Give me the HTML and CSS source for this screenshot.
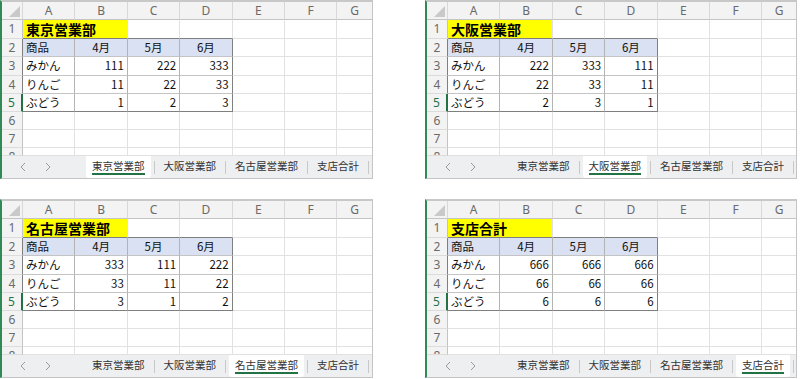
FILE: index.html
```html
<!DOCTYPE html>
<html>

<head>
  <title>支店別売上</title>
  <link rel="stylesheet" href="styles.css">
</head>

<body>
  <div id="sheets"></div>

  <script>
    var tabs = ["東京営業部", "大阪営業部", "名古屋営業部", "支店合計"];
    var fruits = ["みかん", "りんご", "ぶどう"];
    var cols = ["A", "B", "C", "D", "E", "F", "G"];
    var data = [
      [[111, 222, 333], [11, 22, 33], [1, 2, 3]],
      [[222, 333, 111], [22, 33, 11], [2, 3, 1]],
      [[333, 111, 222], [33, 11, 22], [3, 1, 2]],
      [[666, 666, 666], [66, 66, 66], [6, 6, 6]]
    ];

    function cell(parent, cls, text) {
      var d = document.createElement("div");
      d.className = "c " + cls;
      if (text !== undefined) d.textContent = text;
      parent.appendChild(d);
      return d;
    }

    function chevron(points) {
      return '<svg width="6" height="10" viewBox="0 0 6 10"><polyline points="' + points +
        '" fill="none" stroke="#9a9a9a" stroke-width="1"/></svg>';
    }

    var box = document.getElementById("sheets");

    for (var s = 0; s < tabs.length; s++) {
      var win = document.createElement("div");
      win.className = "win";

      // Grid: column letters, then rows 1 to 8
      var grid = document.createElement("div");
      grid.className = "grid";
      cell(grid, "hd corner");
      for (var i = 0; i < cols.length; i++) {
        cell(grid, "hd" + (i == 6 ? " g" : ""), cols[i]);
      }

      for (var r = 1; r <= 8; r++) {
        var rcls = "rh";
        if (r >= 2 && r <= 5) rcls += " tl";
        if (r == 5) rcls += " sel";
        if (r == 8) rcls += " cut";
        cell(grid, rcls, r);

        for (var c = 0; c < cols.length; c++) {
          var g = (c == 6 ? " g" : "");
          if (r == 1 && c == 0) {
            cell(grid, "title top", tabs[s]);
            c++;
          } else if (r == 1 && c < 4) {
            cell(grid, "top");
          } else if (r >= 2 && r <= 5 && c < 4) {
            var cls = "tb";
            if (c == 3) cls += " re";
            if (r == 5) cls += " be";
            if (r == 2) {
              cls += " th" + (c == 0 ? " first" : "");
              cell(grid, cls, c == 0 ? "商品" : (c + 3) + "月");
            } else if (c == 0) {
              cell(grid, cls, fruits[r - 3]);
            } else {
              cell(grid, cls + " num", data[s][r - 3][c - 1]);
            }
          } else {
            cell(grid, "plain" + g);
          }
        }
      }
      win.appendChild(grid);

      // Sheet tabs
      var bar = document.createElement("div");
      bar.className = "tabbar";
      var navs = document.createElement("div");
      navs.className = "navs";
      navs.innerHTML = '<span class="nav">' + chevron("5,1 1,5 5,9") + '</span>' +
        '<span class="nav">' + chevron("1,1 5,5 1,9") + '</span>';
      bar.appendChild(navs);

      for (var t = 0; t < tabs.length; t++) {
        var tab = document.createElement("div");
        tab.className = "tab" + (t == s ? " on" : "");
        tab.innerHTML = "<span>" + tabs[t] + "</span>";
        bar.appendChild(tab);
        var sep = document.createElement("div");
        sep.className = "sep";
        bar.appendChild(sep);
      }
      win.appendChild(bar);

      box.appendChild(win);
    }
  </script>
</body>

</html>
```

FILE: styles.css
```css
body {
  margin: 0;
  background: #fff;
  font-family: "Noto Sans CJK JP", "Noto Sans", sans-serif;
}

#sheets {
  display: grid;
  grid-template-columns: 373px 372px;
  grid-auto-rows: 179px;
  column-gap: 52px;
  row-gap: 20px;
}

.win {
  box-sizing: border-box;
  display: flex;
  flex-direction: column;
  border: 1px solid #c4c4c4;
  border-top: 2px solid #c8c8c8;
  border-left: 2px solid #2f8a55;
  overflow: hidden;
}

.grid {
  flex: 1;
  min-height: 0;
  display: grid;
  grid-template-columns: 21px repeat(6, 52.4px) 1fr;
  grid-template-rows: 18px 19px 18px 19px 18px 18px 18px 18px 1fr;
  overflow: hidden;
}

.c {
  box-sizing: border-box;
  display: flex;
  align-items: center;
  padding: 0 3px;
  border-right: 1px solid #e1e1e1;
  border-bottom: 1px solid #e1e1e1;
  font-size: 11.5px;
  line-height: 1;
  color: #111;
  white-space: nowrap;
  overflow: hidden;
}

.g {
  border-right: none;
}

/* headings */
.hd,
.rh {
  justify-content: center;
  padding: 0;
  background: #f3f3f3;
  color: #6a6a6a;
  font-family: "Noto Sans", sans-serif;
  font-size: 12px;
}

.hd {
  border-right-color: #d8d8d8;
  border-bottom-color: #c4c4c4;
}

.rh {
  border-right-color: #c4c4c4;
  border-bottom-color: #dcdcdc;
}

.corner {
  justify-content: flex-end;
  align-items: flex-end;
  padding: 0 2px 2px 0;
}

.corner::after {
  content: "";
  width: 11px;
  height: 11px;
  background: #c9c9c9;
  clip-path: polygon(100% 0, 100% 100%, 0 100%);
}

.rh.sel {
  color: #217346;
  border-right: 2px solid #217346;
}

.rh.cut {
  align-items: flex-start;
  line-height: 18px;
}

/* data table */
.title {
  grid-column: span 2;
  background: #ffff00;
  font-weight: bold;
  font-size: 14px;
  color: #000;
}

.top {
  border-bottom-color: #7f7f7f;
}

.rh.tl {
  border-right-color: #7f7f7f;
}

.rh.tl.sel {
  border-right-color: #217346;
}

.tb {
  border-right-color: #b4b4b4;
  border-bottom-color: #c4c4c4;
}

.tb.re {
  border-right-color: #7f7f7f;
}

.tb.be {
  border-bottom-color: #7f7f7f;
}

.th {
  justify-content: center;
  background: #d9e1f2;
}

.th.first {
  justify-content: flex-start;
}

.num {
  justify-content: flex-end;
}

/* sheet tabs */
.tabbar {
  flex: none;
  height: 22px;
  display: flex;
  align-items: center;
  background: #eeeff1;
  font-size: 10.5px;
  color: #333;
}

.navs {
  flex: none;
  width: 81px;
  box-sizing: border-box;
  padding-left: 8px;
  display: flex;
}

.nav {
  width: 25px;
  display: flex;
  justify-content: center;
}

.tab {
  flex: none;
  height: 100%;
  margin: 0 3px;
  padding: 0 6px;
  display: flex;
  align-items: center;
  border-radius: 0 0 3px 3px;
}

.tab span {
  display: block;
  line-height: 14px;
  border-bottom: 2px solid transparent;
}

.tab.on {
  background: #fff;
}

.tab.on span {
  border-bottom-color: #217346;
}

.sep {
  flex: none;
  width: 1px;
  height: 13px;
  background: #c8c8c8;
}
```
